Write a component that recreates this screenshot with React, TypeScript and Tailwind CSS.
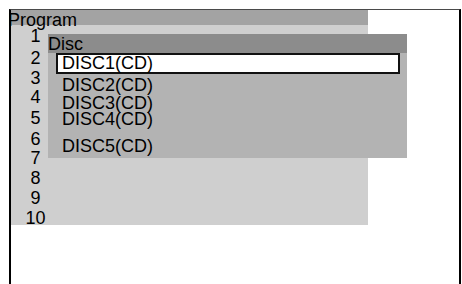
const numbers = [
  { n: "1", h: "h-[23px] leading-[23px]" },
  { n: "2", h: "h-[21px] leading-[21px]" },
  { n: "3", h: "h-[18px] leading-[18px]" },
  { n: "4", h: "h-[21px] leading-[21px]" },
  { n: "5", h: "h-[21px] leading-[21px]" },
  { n: "6", h: "h-[20px] leading-[20px]" },
  { n: "7", h: "h-[19px] leading-[19px]" },
  { n: "8", h: "h-[20px] leading-[20px]" },
  { n: "9", h: "h-[20px] leading-[20px]" },
  { n: "10", h: "h-[20px] leading-[20px]" },
];

const discs = [
  { label: "DISC2(CD)", h: "mt-[2px] h-[19px] leading-[19px]" },
  { label: "DISC3(CD)", h: "h-[17px] leading-[17px]" },
  { label: "DISC4(CD)", h: "h-[15px] leading-[15px]" },
  { label: "DISC5(CD)", h: "mt-[9px] h-[20px] leading-[20px]" },
];

export default function App() {
  return (
    <div className="w-[462px] h-[284px] bg-white pt-[9px] pl-[9px] font-['Liberation_Sans',Arial,sans-serif] text-[18px] leading-[20px] text-black overflow-hidden">
      <div className="relative w-[452px] h-[275px] border-t border-t-[#4a4a4a] border-x-2 border-x-black">
        <div className="w-[357px]">
          <div className="h-[20px] bg-[#a3a3a3]">
            <span className="relative -left-[3px]">Program</span>
          </div>
          <div className="h-[200px] bg-[#cfcfcf]">
            <div className="w-[49px] -mt-[5px] text-center">
              {numbers.map((r) => (
                <div key={r.n} className={r.h}>
                  {r.n}
                </div>
              ))}
            </div>
          </div>
        </div>

        <div className="absolute left-[37px] top-[24px] w-[359px]">
          <div className="h-[19px] bg-[#8c8c8c]">Disc</div>
          <div className="bg-[#b3b3b3] pb-[2px]">
            <div className="ml-[8px] w-[344px] h-[21px] border-2 border-[#111] bg-white pl-[4px] leading-[17px]">
              DISC1(CD)
            </div>
            {discs.map((d) => (
              <div key={d.label} className={`${d.h} pl-[14px]`}>
                {d.label}
              </div>
            ))}
          </div>
        </div>
      </div>
    </div>
  );
}
